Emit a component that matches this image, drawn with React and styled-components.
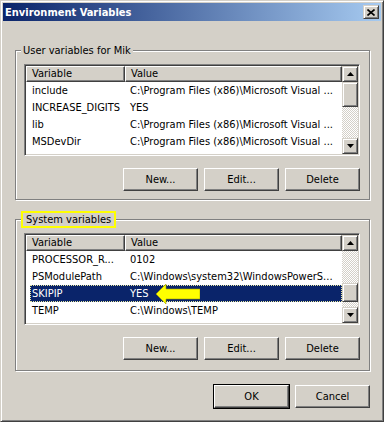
import React from "react";
import styled, { createGlobalStyle } from "styled-components";

const FONT = `"DejaVu Sans Condensed", "Liberation Sans", sans-serif`;

const userVars = [
  ["include", "C:\\Program Files (x86)\\Microsoft Visual ..."],
  ["INCREASE_DIGITS", "YES"],
  ["lib", "C:\\Program Files (x86)\\Microsoft Visual ..."],
  ["MSDevDir", "C:\\Program Files (x86)\\Microsoft Visual ..."],
  ["Path", "C:\\Program Files (x86)\\Microsoft Visual ..."],
];

const systemVars = [
  ["PROCESSOR_R...", "0102"],
  ["PSModulePath", "C:\\Windows\\system32\\WindowsPowerS..."],
  ["SKIPIP", "YES", true],
  ["TEMP", "C:\\Windows\\TEMP"],
  ["TMP", "C:\\Windows\\TEMP"],
];

const GlobalStyle = createGlobalStyle`
  html, body { margin: 0; padding: 0; background: #d4d0c8; }
  body { font-family: ${FONT}; font-size: 11px; color: #000; }
  * { box-sizing: border-box; }
`;

const Window = styled.div`
  width: 384px;
  height: 422px;
  background: #d4d0c8;
  border: 1px solid;
  border-color: #d4d0c8 #404040 #404040 #d4d0c8;
  box-shadow: inset 1px 1px 0 #fff, inset -1px -1px 0 #808080;
  padding: 2px;
  display: flex;
  flex-direction: column;
`;

const TitleBar = styled.div`
  height: 18px;
  display: flex;
  align-items: center;
  justify-content: space-between;
  padding: 0 2px 0 2px;
  background: linear-gradient(to right, #0a246a, #a6caf0);
`;

const Title = styled.span`
  color: #fff;
  font-weight: bold;
  font-size: 11px;
`;

const Bevel = styled.div`
  background: #d4d0c8;
  border: 1px solid;
  border-color: #d4d0c8 #404040 #404040 #d4d0c8;
  box-shadow: inset 1px 1px 0 #fff, inset -1px -1px 0 #808080;
  display: flex;
  align-items: center;
  justify-content: center;
`;

const CloseButton = styled(Bevel)`
  width: 16px;
  height: 14px;
`;

const Content = styled.div`
  padding: 0 11px 0 12px;
  display: flex;
  flex-direction: column;
`;

const GroupBox = styled.fieldset`
  margin: ${(p) => p.$top}px 0 0;
  padding: 7px 9px ${(p) => p.$bottom}px 8px;
  border: 1px solid #808080;
  box-shadow: 1px 1px 0 #fff, inset 1px 1px 0 #fff;
  min-width: 0;
`;

const Legend = styled.legend`
  padding: 0 2px;
  margin-left: -3px;
  line-height: 13px;
  background: #d4d0c8;
`;

const Marked = styled.span`
  padding: 0 3px;
  outline: 2px solid #ffff00;
  outline-offset: 0;
`;

const ListView = styled.div`
  position: relative;
  height: 92px;
  background: #fff;
  border: 1px solid;
  border-color: #808080 #fff #fff #808080;
  box-shadow: inset 1px 1px 0 #404040, inset -1px -1px 0 #d4d0c8;
  padding: 1px;
  display: flex;
`;

const TableArea = styled.div`
  flex: 1;
  min-width: 0;
  overflow: hidden;
  display: flex;
  flex-direction: column;
`;

const Header = styled.div`
  display: flex;
  height: 16px;
  flex-shrink: 0;
`;

const HeaderCell = styled.div`
  width: ${(p) => (p.$w ? `${p.$w}px` : "auto")};
  flex: ${(p) => (p.$w ? "none" : "1")};
  background: #d4d0c8;
  border: 1px solid;
  border-color: #fff #404040 #404040 #fff;
  box-shadow: inset -1px -1px 0 #808080;
  padding-left: 5px;
  line-height: 14px;
  white-space: nowrap;
  overflow: hidden;
`;

const Row = styled.div`
  display: flex;
  align-items: center;
  height: 17px;
  flex-shrink: 0;
  margin-left: 4px;
  background: ${(p) => (p.$selected ? "#0a246a" : "transparent")};
  color: ${(p) => (p.$selected ? "#fff" : "#000")};
  outline: ${(p) => (p.$selected ? "1px dotted #e8e8a0" : "none")};
  outline-offset: -1px;
`;

const Cell = styled.div`
  width: ${(p) => (p.$w ? `${p.$w}px` : "auto")};
  flex: ${(p) => (p.$w ? "none" : "1")};
  padding: 0 2px;
  white-space: nowrap;
  overflow: hidden;
`;

const ScrollBar = styled.div`
  width: 16px;
  display: flex;
  flex-direction: column;
`;

const ScrollButton = styled(Bevel)`
  height: 16px;
  flex-shrink: 0;
`;

const Track = styled.div`
  flex: 1;
  padding-top: ${(p) => p.$offset}px;
  background: repeating-conic-gradient(#fff 0% 25%, #d4d0c8 0% 50%) 0 0 / 2px 2px;
`;

const Thumb = styled(Bevel)`
  height: ${(p) => p.$h}px;
`;

const ButtonRow = styled.div`
  display: flex;
  justify-content: flex-end;
  gap: 6px;
  margin-top: ${(p) => p.$top}px;
`;

const Button = styled.button`
  width: 75px;
  height: 23px;
  padding: 0;
  font-family: ${FONT};
  font-size: 11px;
  color: #000;
  background: #d4d0c8;
  border: 1px solid;
  border-color: #fff #404040 #404040 #fff;
  box-shadow: inset -1px -1px 0 #808080;
  outline: ${(p) => (p.$default ? "1px solid #000" : "none")};
  margin-left: ${(p) => (p.$default ? "1px" : "0")};
`;

const Pointer = styled.svg`
  position: absolute;
  left: 131px;
  top: 50px;
`;

function Arrow({ up }) {
  return (
    <svg width="7" height="4" viewBox="0 0 7 4">
      <polygon points={up ? "3.5,0 7,4 0,4" : "0,0 7,0 3.5,4"} fill="#000" />
    </svg>
  );
}

function VarList({ rows, thumbOffset, thumbHeight, children }) {
  return (
    <ListView>
      <TableArea>
        <Header>
          <HeaderCell $w={99}>Variable</HeaderCell>
          <HeaderCell>Value</HeaderCell>
        </Header>
        {rows.map(([name, value, selected]) => (
          <Row key={name} $selected={selected}>
            <Cell $w={98}>{name}</Cell>
            <Cell>{value}</Cell>
          </Row>
        ))}
      </TableArea>
      <ScrollBar>
        <ScrollButton>
          <Arrow up />
        </ScrollButton>
        <Track $offset={thumbOffset}>
          <Thumb $h={thumbHeight} />
        </Track>
        <ScrollButton>
          <Arrow />
        </ScrollButton>
      </ScrollBar>
      {children}
    </ListView>
  );
}

export default function App() {
  return (
    <>
      <GlobalStyle />
      <Window>
        <TitleBar>
          <Title>Environment Variables</Title>
          <CloseButton>
            <svg width="8" height="7" viewBox="0 0 8 7">
              <path d="M0.5 0.5 L7.5 6.5 M7.5 0.5 L0.5 6.5" stroke="#000" strokeWidth="1.6" />
            </svg>
          </CloseButton>
        </TitleBar>
        <Content>
          <GroupBox $top={23} $bottom={8}>
            <Legend>User variables for Mik</Legend>
            <VarList rows={userVars} thumbOffset={0} thumbHeight={25} />
            <ButtonRow $top={12}>
              <Button>New...</Button>
              <Button>Edit...</Button>
              <Button>Delete</Button>
            </ButtonRow>
          </GroupBox>
          <GroupBox $top={13} $bottom={10}>
            <Legend>
              <Marked>System variables</Marked>
            </Legend>
            <VarList rows={systemVars} thumbOffset={32} thumbHeight={19}>
              <Pointer width="44" height="20" viewBox="0 0 44 20">
                <polygon
                  points="0,10 10,0 10,5 44,5 44,15 10,15 10,20"
                  fill="#ffff00"
                  stroke="#a0a000"
                  strokeWidth="0.6"
                />
              </Pointer>
            </VarList>
            <ButtonRow $top={12}>
              <Button>New...</Button>
              <Button>Edit...</Button>
              <Button>Delete</Button>
            </ButtonRow>
          </GroupBox>
          <ButtonRow $top={14}>
            <Button $default>OK</Button>
            <Button>Cancel</Button>
          </ButtonRow>
        </Content>
      </Window>
    </>
  );
}
